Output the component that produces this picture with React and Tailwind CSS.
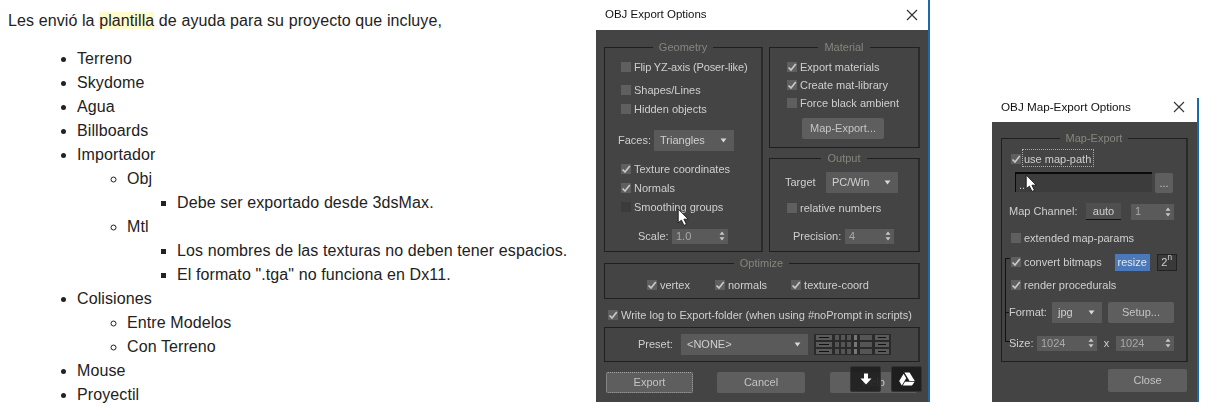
import React from 'react';

const CheckMark = () => (
    <svg viewBox="0 0 10 10" className="w-[10px] h-[10px]">
        <path d="M1.5 5.5 L4 8 L8.8 2" fill="none" stroke="#c8c8c8" strokeWidth="1.7" />
    </svg>
);

const Check = ({ label, checked, dark, box = 'mr-[2px]' }) => (
    <div className="flex items-center h-[18px]">
        <div className={`w-[10px] h-[10px] shrink-0 ${box} ${dark ? 'bg-[#3b3b3b]' : 'bg-[#5f5f5f]'}`}>
            {checked && <CheckMark />}
        </div>
        {label && <span className="ml-[1px] whitespace-nowrap">{label}</span>}
    </div>
);

const Arrow = () => (
    <svg viewBox="0 0 8 6" className="w-[7px] h-[5px]">
        <path d="M0.5 0.5 H7.5 L4 5.5 Z" fill="#d8d8d8" />
    </svg>
);

const Combo = ({ label, className }) => (
    <div className={`flex items-center justify-between h-[21px] bg-[#5a5a5a] pl-[6px] pr-[7px] ${className}`}>
        <span>{label}</span>
        <Arrow />
    </div>
);

const Spinner = ({ value, className }) => (
    <div className={`flex items-center justify-between h-[15px] bg-[#5a5a5a] pl-[4px] pr-[3px] text-[#a9a9a9] ${className}`}>
        <span>{value}</span>
        <svg viewBox="0 0 6 10" className="w-[6px] h-[10px]">
            <path d="M3 0.5 L5.5 3.8 H0.5 Z M3 9.5 L5.5 6.2 H0.5 Z" fill="#c8c8c8" />
        </svg>
    </div>
);

const Button = ({ children, className }) => (
    <div className={`flex items-center justify-center bg-[#5e5e5e] rounded-[2px] text-[#c4c4c4] ${className}`}>{children}</div>
);

const Group = ({ title, className, children }) => (
    <div className={`relative border border-[#1f1f1f] border-r-2 border-r-[#2a2a2a] ${className}`}>
        {title && (
            <div className="absolute -top-[9px] left-0 right-0 flex justify-center">
                <span className="bg-[#444444] px-[6px] text-[#86867e] leading-4">{title}</span>
            </div>
        )}
        {children}
    </div>
);

const Cursor = ({ className }) => (
    <svg viewBox="0 0 12 18" className={`absolute w-[13px] h-[19px] ${className}`}>
        <path d="M1 1 V14 L4 11.5 L6.5 16.5 L8.8 15.4 L6.4 10.6 H10.5 Z" fill="#fff" stroke="#111" strokeWidth="0.8" />
    </svg>
);

const PresetIcons = () => (
    <svg viewBox="0 0 77 21" className="w-[77px] h-[21px] ml-[6px]">
        <rect width="77" height="21" fill="#2a2a2a" />
        {[1, 8, 15].map((y) => (
            <g key={y}>
                <rect x="2" y={y} width="16" height="5" fill="#5a5a5a" />
                <rect x="5" y={y + 2} width="10" height="1" fill="#111" />
                <rect x="21" y={y} width="4" height="5" fill="#555" />
                <rect x="27" y={y} width="4" height="5" fill="#555" />
                <rect x="33" y={y} width="4" height="5" fill="#555" />
                <rect x="40" y={y} width="3" height="5" fill="#777" />
                <rect x="46" y={y} width="12" height="5" fill="#555" />
                <rect x="61" y={y} width="14" height="5" fill="#5a5a5a" />
                <rect x="64" y={y + 2} width="8" height="1" fill="#111" />
            </g>
        ))}
    </svg>
);

const ObjExport = () => (
    <div className="relative w-[334px] h-[402px] shrink-0 border-r-2 border-r-[#1a6aa8] font-['Liberation_Sans',sans-serif] text-[11px] text-[#cfcfcf]">
        <div className="flex items-center justify-between h-[30px] bg-white pl-[9px] pr-[10px] text-[11.5px] text-[#111] blur-[0.4px]">
            <span>OBJ Export Options</span>
            <svg viewBox="0 0 12 12" className="w-[12px] h-[12px]">
                <path d="M1 1 L11 11 M11 1 L1 11" stroke="#333" strokeWidth="1.2" />
            </svg>
        </div>
        <div className="h-[372px] bg-[#444444] pl-[8px] pt-[17px] blur-[0.5px]">
            <div className="flex w-[316px] gap-[6px]">
                <Group title="Geometry" className="w-[159px] h-[205px] pl-[16px] pt-[10px]">
                    <Check label={<span className="tracking-[-0.15px]">Flip YZ-axis (Poser-like)</span>} />
                    <div className="mt-[5px]"><Check label="Shapes/Lines" /></div>
                    <div className="mt-[1px]"><Check label="Hidden objects" /></div>
                    <div className="flex items-center mt-[12px] -ml-[3px]">
                        <span className="w-[36px]">Faces:</span>
                        <Combo label="Triangles" className="w-[80px]" />
                    </div>
                    <div className="mt-[9px]"><Check label="Texture coordinates" checked /></div>
                    <div className="mt-[1px]"><Check label="Normals" checked /></div>
                    <div className="mt-[1px]"><Check label="Smoothing groups" dark /></div>
                    <div className="flex items-center mt-[12px] ml-[17px]">
                        <span className="w-[34px]">Scale:</span>
                        <Spinner value="1.0" className="w-[56px]" />
                    </div>
                </Group>
                <div className="flex flex-col gap-[10px] w-[151px]">
                    <Group title="Material" className="h-[101px] pl-[17px] pt-[10px]">
                        <Check label="Export materials" checked />
                        <Check label="Create mat-library" checked />
                        <Check label="Force black ambient" />
                        <Button className="w-[82px] h-[21px] mt-[6px] ml-[15px]">Map-Export...</Button>
                    </Group>
                    <Group title="Output" className="h-[94px] pl-[15px] pt-[13px]">
                        <div className="flex items-center">
                            <span className="w-[41px]">Target</span>
                            <Combo label="PC/Win" className="w-[72px]" />
                        </div>
                        <div className="mt-[6px] ml-[2px]"><Check label="relative numbers" /></div>
                        <div className="flex items-center mt-[11px] ml-[8px]">
                            <span className="w-[52px]">Precision:</span>
                            <Spinner value="4" className="w-[49px]" />
                        </div>
                    </Group>
                </div>
            </div>
            <Group title="Optimize" className="flex w-[316px] h-[36px] mt-[11px] pl-[42px] pt-[12px]">
                <Check label="vertex" checked />
                <div className="ml-[25px]"><Check label="normals" checked /></div>
                <div className="ml-[24px]"><Check label="texture-coord" checked /></div>
            </Group>
            <div className="mt-[7px] ml-[4px]"><Check label="Write log to Export-folder (when using #noPrompt in scripts)" checked /></div>
            <Group className="flex items-start w-[316px] h-[35px] mt-[3px] pl-[33px] pt-[6px]">
                <span className="w-[43px] leading-[21px]">Preset:</span>
                <Combo label="<NONE>" className="w-[127px]" />
                <PresetIcons />
            </Group>
            <div className="flex mt-[10px] ml-[2px]">
                <Button className="w-[87px] h-[21px] border border-dotted border-[#a8a8a8]">Export</Button>
                <Button className="w-[88px] h-[21px] ml-[24px]">Cancel</Button>
                <Button className="w-[87px] h-[21px] ml-[25px]">Help</Button>
            </div>
        </div>
        <div className="absolute left-[254px] top-[366px] flex gap-[10px]">
            <div className="flex items-center justify-center w-[31px] h-[26px] bg-[#1e1e1e]/90 rounded-[2px] border border-[#333]">
                <svg viewBox="0 0 12 12" className="w-[12px] h-[12px]">
                    <path d="M4 0.5 H8 V5.5 H11.5 L6 11.5 L0.5 5.5 H4 Z" fill="#fff" />
                </svg>
            </div>
            <div className="flex items-center justify-center w-[31px] h-[26px] bg-[#1e1e1e] rounded-[2px] border border-[#333]">
                <svg viewBox="0 0 16 14" className="w-[16px] h-[14px]">
                    <path d="M5.4 0.5 H10.6 L15.8 9 H10.6 Z M4.6 1.8 L7.2 6.2 L2.8 13.5 L0.2 9 Z M6 9.8 H15.6 L13 13.5 H3.8 Z" fill="#fff" />
                </svg>
            </div>
        </div>
        <Cursor className="left-[81px] top-[208px]" />
    </div>
);

const MapExport = () => (
    <div className="relative w-[207px] h-[304px] shrink-0 mt-[98px] ml-[62px] border-r-2 border-r-[#1a6aa8] font-['Liberation_Sans',sans-serif] text-[11px] text-[#cfcfcf]">
        <div className="flex items-center justify-between h-[24px] bg-white pl-[9px] pr-[12px] pb-[6px] text-[11.7px] text-[#111] blur-[0.4px]">
            <span>OBJ Map-Export Options</span>
            <svg viewBox="0 0 12 12" className="w-[12px] h-[12px]">
                <path d="M1 1 L11 11 M11 1 L1 11" stroke="#333" strokeWidth="1.1" />
            </svg>
        </div>
        <div className="h-[280px] bg-[#444444] pl-[9px] pt-[16px] blur-[0.5px]">
            <Group title="Map-Export" className="w-[187px] h-[224px] pl-[9px] pt-[11px]">
                <div className="relative w-fit">
                    <Check label="use map-path" checked />
                    <div className="absolute -top-[1px] left-[11px] w-[72px] h-[18px] border border-dotted border-[#aaa]" />
                </div>
                <div className="flex mt-[4px] ml-[4px] gap-[3px]">
                    <div className="flex items-end w-[137px] h-[20px] bg-[#3c3c3c] border-t-2 border-l border-[#0a0a0a] pl-[3px] pb-[1px] leading-none">..</div>
                    <Button className="w-[18px] h-[20px] mt-[1px]">...</Button>
                </div>
                <div className="flex items-center mt-[10px] -ml-[2px]">
                    <span className="w-[77px] whitespace-nowrap">Map Channel:</span>
                    <div className="flex items-center justify-center w-[35px] h-[17px] bg-[#4f4f4f] border-b border-b-[#111]">auto</div>
                    <Spinner value="1" className="w-[43px] ml-[10px] !h-[16px]" />
                </div>
                <div className="mt-[9px]"><Check label="extended map-params" /></div>
                <div className="flex items-center mt-[6px]">
                    <Check label="convert bitmaps" checked />
                    <div className="flex items-center justify-center w-[35px] h-[17px] ml-[13px] bg-[#4a78b8] text-[#dfe8f5]">resize</div>
                    <div className="flex items-center justify-center w-[20px] h-[17px] ml-[7px] bg-[#3a3a3a] border border-[#222]">2<sup>n</sup></div>
                </div>
                <div className="mt-[5px]"><Check label="render procedurals" checked /></div>
                <div className="flex items-center mt-[8px] -ml-[2px]">
                    <span className="w-[43px]">Format:</span>
                    <Combo label="jpg" className="w-[50px]" />
                    <Button className="w-[66px] h-[21px] ml-[6px]">Setup...</Button>
                </div>
                <div className="flex items-center mt-[12px] -ml-[2px]">
                    <span className="w-[28px]">Size:</span>
                    <Spinner value="1024" className="w-[60px]" />
                    <span className="w-[19px] text-center">x</span>
                    <Spinner value="1024" className="w-[58px]" />
                </div>
                <div className="absolute left-[3px] top-[119px] w-[5px] h-[84px] border-l border-t border-b border-[#111]">
                    <div className="absolute left-0 top-[53px] w-[3px] border-t border-[#111]" />
                </div>
            </Group>
            <Button className="w-[79px] h-[23px] mt-[7px] ml-[107px]">Close</Button>
        </div>
        <Cursor className="left-[33px] top-[76px]" />
    </div>
);

export default function App() {
    return (
        <div className="flex w-[1222px] h-[420px] overflow-hidden bg-white">
            <div className="w-[596px] shrink-0 pt-[9px] pl-[8px] font-['Liberation_Sans',sans-serif] text-[16px] leading-6 tracking-[0.1px] text-[#222]">
                <p className="mb-[14px]">
                    Les envió la <span className="bg-[#fffbcc]">plantilla</span> de ayuda para su proyecto que incluye,
                </p>
                <ul className="list-disc pl-[69px]">
                    <li>Terreno</li>
                    <li>Skydome</li>
                    <li>Agua</li>
                    <li>Billboards</li>
                    <li>
                        Importador
                        <ul className="list-[circle] pl-[50px]">
                            <li>
                                Obj
                                <ul className="list-[square] pl-[50px]">
                                    <li>Debe ser exportado desde 3dsMax.</li>
                                </ul>
                            </li>
                            <li>
                                Mtl
                                <ul className="list-[square] pl-[50px]">
                                    <li>Los nombres de las texturas no deben tener espacios.</li>
                                    <li>El formato ".tga" no funciona en Dx11.</li>
                                </ul>
                            </li>
                        </ul>
                    </li>
                    <li>
                        Colisiones
                        <ul className="list-[circle] pl-[50px]">
                            <li>Entre Modelos</li>
                            <li>Con Terreno</li>
                        </ul>
                    </li>
                    <li>Mouse</li>
                    <li>Proyectil</li>
                </ul>
            </div>
            <ObjExport />
            <MapExport />
        </div>
    );
}
